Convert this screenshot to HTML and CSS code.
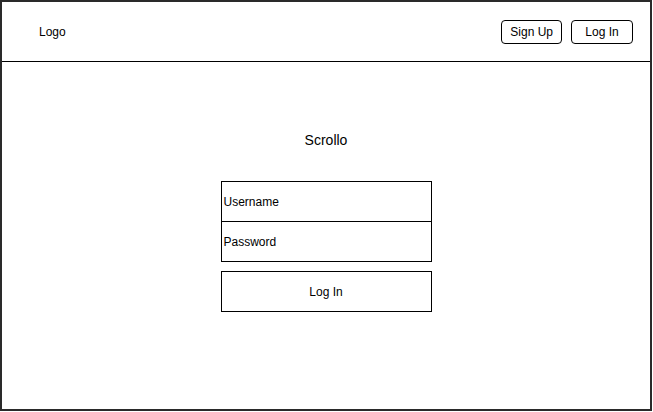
FILE: index.html
```html
<!Doctype html>
<html lang="en">
<head>
	<meta charset="utf-8">
	<title>Scrollo</title>
	<link rel="stylesheet" href="styles.css">
</head>
<body>
	<div class="frame">
		<div class="header">
			<div class="logo">Logo</div>
			<div class="nav">
				<div class="nav-btn">Sign Up</div>
				<div class="nav-btn">Log In</div>
			</div>
		</div>

		<div class="main">
			<div class="title">Scrollo</div>
			<div class="fields">
				<div class="field">Username</div>
				<div class="field">Password</div>
			</div>
			<div class="submit">Log In</div>
		</div>
	</div>
</body>
</html>
```

FILE: styles.css
```css
html, body {
	margin: 0;
	padding: 0;
	background: #fff;
}

body {
	font-family: "Liberation Sans", Arial, sans-serif;
	font-size: 12px;
	color: #000;
}

.frame {
	width: 652px;
	height: 411px;
	box-sizing: border-box;
	border: 2px solid #2a2a2a;
	display: flex;
	flex-direction: column;
}

.header {
	height: 59px;
	border-bottom: 1px solid #000;
	display: flex;
	align-items: flex-start;
	justify-content: space-between;
	padding: 0 17px 0 37px;
}

.logo {
	margin-top: 23px;
	line-height: 15px;
}

.nav {
	display: flex;
	gap: 9px;
	margin-top: 18px;
}

.nav-btn {
	height: 22px;
	line-height: 23px;
	border: 1px solid #000;
	border-radius: 4px;
	padding: 0 8px;
	text-align: center;
}

.nav-btn + .nav-btn {
	width: 44px;
}

.main {
	display: flex;
	flex-direction: column;
	align-items: center;
	padding-top: 70px;
}

.title {
	font-size: 14px;
	line-height: 17px;
	margin-bottom: 32px;
}

.fields {
	width: 209px;
	border: 1px solid #000;
}

.field {
	height: 39px;
	line-height: 41px;
	padding-left: 2px;
}

.field + .field {
	border-top: 1px solid #000;
}

.submit {
	width: 209px;
	height: 39px;
	line-height: 41px;
	border: 1px solid #000;
	margin-top: 9px;
	text-align: center;
}
```
